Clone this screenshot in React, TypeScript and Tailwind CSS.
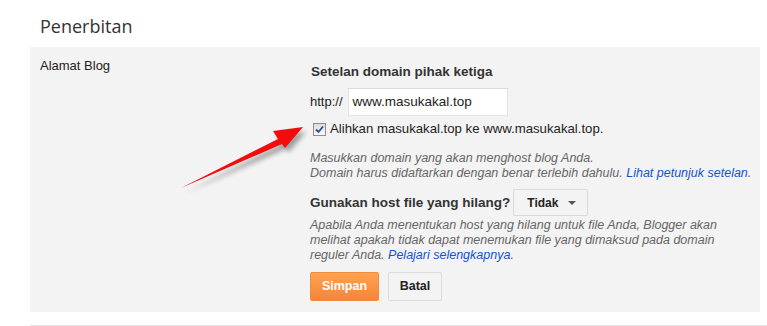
export default function App() {
  return (
    <div className="relative h-[326px] w-[767px] overflow-hidden bg-white font-['Liberation_Sans',Arial,sans-serif] text-[13px] text-[#222]">
      <div className="h-[47px] pl-[40px] pt-[13px] font-['Open_Sans',sans-serif] text-[18px] leading-[26px] text-[#333]">
        Penerbitan
      </div>

      <div className="ml-[30px] mr-[7px] flex h-[265px] bg-[#f3f3f3]">
        <div className="w-[280px] pl-[10px] pt-[11px] leading-[16px] text-[#222]">Alamat Blog</div>

        <div className="flex flex-col pt-[17px]">
          <div className="pl-px text-[13.5px] font-bold leading-[16px] text-[#333]">Setelan domain pihak ketiga</div>

          <div className="mt-[8px] flex items-center gap-[5px]">
            <span className="leading-[16px]">http://</span>
            <div className="flex h-[28px] w-[160px] items-center border border-[#e5e5e5] border-t-[#d9d9d9] bg-white pl-[4px] text-[13.5px] text-[#222]">
              www.masukakal.top
            </div>
          </div>

          <div className="mt-[5px] flex items-center gap-[4px] pl-[3px]">
            <span className="flex h-[13px] w-[13px] items-center justify-center border border-[#8f8f8f] bg-gradient-to-b from-[#dcdcdc] to-[#fafafa]">
              <svg width="9" height="9" viewBox="0 0 9 9">
                <path d="M1 4.5 L3.5 7 L8 1.5" fill="none" stroke="#2d4a9a" strokeWidth="1.8" />
              </svg>
            </span>
            <span className="text-[13.2px] leading-[16px]">Alihkan masukakal.top ke www.masukakal.top.</span>
          </div>

          <div className="mt-[14px] text-[12.5px] italic leading-[15px] text-[#666]">
            <div>Masukkan domain yang akan menghost blog Anda.</div>
            <div>
              Domain harus didaftarkan dengan benar terlebih dahulu.{" "}
              <a className="text-[#15c]" href="#">Lihat petunjuk setelan</a>.
            </div>
          </div>

          <div className="mt-[8px] flex items-center gap-[3px]">
            <span className="text-[13.5px] font-bold leading-[16px] text-[#333]">Gunakan host file yang hilang?</span>
            <div className="flex h-[27px] w-[75px] items-center gap-[10px] rounded-[2px] border border-[#d9d9d9] bg-[#f3f3f3] pl-[13px] text-[12px] font-bold text-[#222]">
              Tidak
              <svg width="8" height="4" viewBox="0 0 8 4">
                <path d="M0 0 L8 0 L4 4 Z" fill="#555" />
              </svg>
            </div>
          </div>

          <p className="mt-[2px] w-[420px] text-[12.5px] italic leading-[15px] text-[#666]">
            Apabila Anda menentukan host yang hilang untuk file Anda, Blogger akan melihat apakah tidak dapat menemukan file yang dimaksud pada domain reguler Anda.{" "}
            <a className="text-[#15c]" href="#">Pelajari selengkapnya</a>.
          </p>

          <div className="mt-[9px] flex gap-[9px]">
            <button className="h-[29px] w-[69px] rounded-[2px] border border-[#f08a3c] bg-gradient-to-b from-[#ffa250] to-[#f5853a] text-[12.5px] font-bold text-white">
              Simpan
            </button>
            <button className="h-[29px] w-[54px] rounded-[2px] border border-[#dcdcdc] bg-[#f3f3f3] text-[12.5px] font-bold text-[#222]">
              Batal
            </button>
          </div>
        </div>
      </div>

      <div className="ml-[30px] mt-[13px] h-px bg-[#e5e5e5]" />

      <svg className="pointer-events-none absolute left-0 top-0" width="767" height="326" viewBox="0 0 767 326">
        <defs>
          <filter id="sh" x="-20%" y="-20%" width="140%" height="140%">
            <feGaussianBlur stdDeviation="2.5" />
          </filter>
        </defs>
        <polygon points="183,190 279,141 275,132 304,129 287,149 283,146" fill="#000" opacity="0.35" filter="url(#sh)" transform="translate(2,3)" />
        <polygon points="181,188 278,139 273,131 303,127 285,148 282,144" fill="#f40c0c" />
      </svg>
    </div>
  );
}
